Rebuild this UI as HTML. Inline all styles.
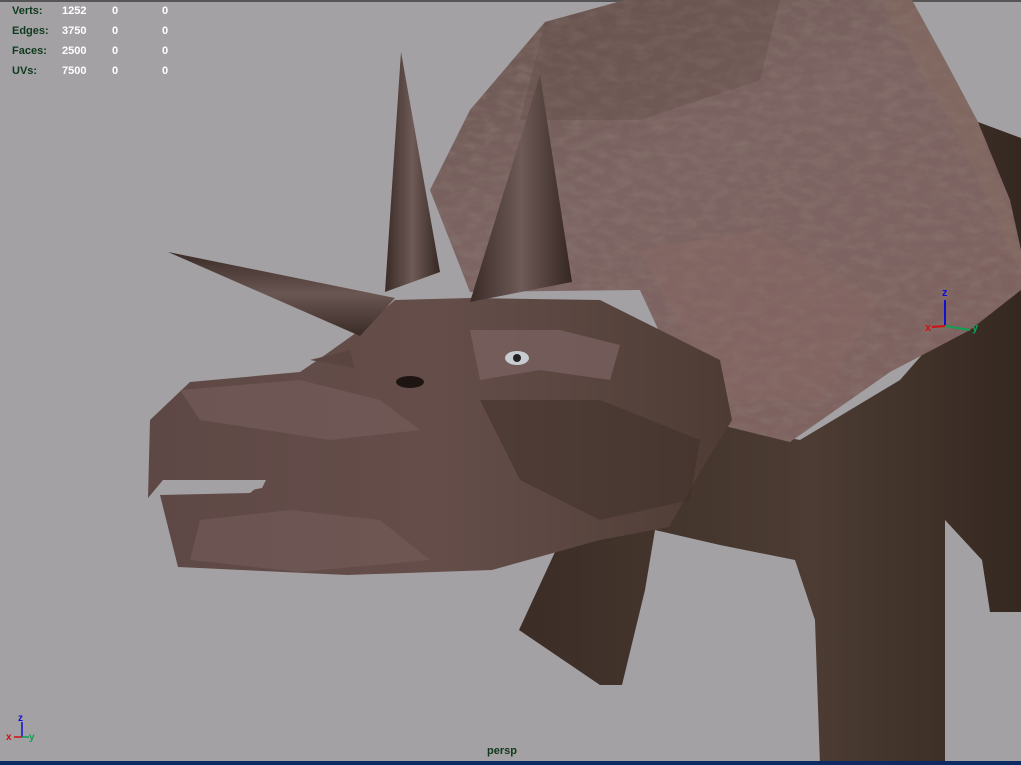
<!DOCTYPE html>
<html><head><meta charset="utf-8"><style>
html,body{margin:0;padding:0;width:1021px;height:765px;overflow:hidden;background:#a3a1a3;font-family:"Liberation Sans",Arial,sans-serif}
.st{position:absolute;font-size:11px;font-weight:bold;color:#fff}
.lb{color:#0f3a1e}
</style></head><body>
<svg width="1021" height="765" style="position:absolute;left:0;top:0">
<defs>
<linearGradient id="fr" x1="0" y1="0" x2="0.6" y2="1"><stop offset="0" stop-color="#6a5550"/><stop offset="0.45" stop-color="#7c6462"/><stop offset="1" stop-color="#7e6260"/></linearGradient>
<linearGradient id="bd" x1="0" y1="0" x2="1" y2="0"><stop offset="0" stop-color="#3a2c25"/><stop offset="0.6" stop-color="#4c3c33"/><stop offset="1" stop-color="#352820"/></linearGradient>
<linearGradient id="hd" x1="0" y1="0" x2="1" y2="0"><stop offset="0" stop-color="#5e4845"/><stop offset="0.5" stop-color="#654e4a"/><stop offset="1" stop-color="#4e3c34"/></linearGradient>
<linearGradient id="hn" x1="0" y1="0" x2="1" y2="0"><stop offset="0" stop-color="#3a2b27"/><stop offset="0.5" stop-color="#6e5a56"/><stop offset="1" stop-color="#352722"/></linearGradient>
<linearGradient id="hn2" x1="0" y1="0" x2="0" y2="1"><stop offset="0" stop-color="#3a2b27"/><stop offset="0.5" stop-color="#6a5652"/><stop offset="1" stop-color="#3a2b27"/></linearGradient>
<filter id="tx" x="0" y="0" width="1" height="1"><feTurbulence type="fractalNoise" baseFrequency="0.06 0.12" numOctaves="3" seed="3"/><feColorMatrix values="0 0 0 0 0.25  0 0 0 0 0.18  0 0 0 0 0.16  0 0 0 1.2 -0.45"/><feComposite in2="SourceGraphic" operator="in"/></filter>
</defs>
<rect x="0" y="0" width="1021" height="2" fill="#555"/>
<!-- body -->
<polygon fill="url(#bd)" points="620,400 700,420 800,440 900,380 970,300 978,122 1021,138 1021,612 990,612 982,560 945,520 945,765 820,765 815,620 795,560 720,545 655,530 645,590 622,685 600,685 519,630 555,552 500,520"/>
<!-- frill -->
<polygon fill="url(#fr)" points="430,190 470,110 545,22 625,0 912,0 945,60 978,122 1010,200 1021,250 1021,290 970,330 890,372 790,442 700,420 640,290 470,292"/>
<polygon fill="#000" filter="url(#tx)" points="430,190 470,110 545,22 625,0 912,0 945,60 978,122 1010,200 1021,250 1021,290 970,330 890,372 790,442 700,420 640,290 470,292"/>
<polygon fill="#8a7060" opacity="0.35" points="880,0 912,0 978,122 1021,250 1021,275 960,140"/>
<polygon fill="#5c4842" opacity="0.3" points="545,22 625,0 780,0 760,80 640,120 520,120"/>
<polygon fill="#8a6a64" opacity="0.4" points="640,250 760,230 880,300 820,400 720,400"/>
<!-- head -->
<polygon fill="url(#hd)" points="150,420 190,382 300,372 325,355 360,330 395,300 470,298 600,300 640,320 720,360 732,420 700,472 669,527 600,540 492,570 347,575 178,567 160,495 250,493 266,480 163,480 148,498"/>
<polygon fill="#7a6260" opacity="0.5" points="180,390 300,380 380,400 420,430 330,440 200,420"/>
<polygon fill="#7a6260" opacity="0.45" points="200,520 290,510 380,520 430,560 300,572 190,560"/>
<polygon fill="#3e2e28" opacity="0.5" points="480,400 600,400 700,440 690,500 600,520 520,480"/>
<polygon fill="#7c6462" opacity="0.7" points="470,330 560,330 620,345 610,380 540,370 480,380"/>
<polygon fill="#a3a1a3" points="163,480 266,480 262,488 240,492 170,493"/>
<ellipse cx="517" cy="358" rx="12" ry="7" fill="#c8ccd0"/><circle cx="517" cy="358" r="4" fill="#222"/>
<ellipse cx="410" cy="382" rx="14" ry="6" fill="#1e1512"/>
<!-- horns -->
<polygon fill="url(#hn2)" points="168,252 395,298 360,336"/>
<polygon fill="url(#hn)" points="401,52 385,292 440,272"/>
<polygon fill="url(#hn)" points="540,75 470,302 572,282"/>
<polygon fill="#5a4540" points="310,360 350,350 355,368"/>
<!-- axes viewport -->
<line x1="945" y1="300" x2="945" y2="326" stroke="#1010d0" stroke-width="2"/>
<line x1="945" y1="326" x2="932" y2="327" stroke="#d01010" stroke-width="2"/>
<line x1="945" y1="326" x2="970" y2="330" stroke="#10a050" stroke-width="2"/>
<text x="942" y="296" font-size="11" font-weight="bold" fill="#1010d0" font-family="Liberation Sans">z</text>
<text x="925" y="331" font-size="11" font-weight="bold" fill="#d01010" font-family="Liberation Sans">x</text>
<text x="972" y="331" font-size="11" font-weight="bold" fill="#10a050" font-family="Liberation Sans">y</text>
<!-- corner axes -->
<line x1="22" y1="722" x2="22" y2="737" stroke="#1010d0" stroke-width="1.5"/>
<line x1="22" y1="737" x2="14" y2="737" stroke="#d01010" stroke-width="1.5"/>
<line x1="22" y1="737" x2="29" y2="737" stroke="#10a050" stroke-width="1.5"/>
<text x="18" y="721" font-size="10" font-weight="bold" fill="#1010d0" font-family="Liberation Sans">z</text>
<text x="6" y="740" font-size="10" font-weight="bold" fill="#d01010" font-family="Liberation Sans">x</text>
<text x="29" y="740" font-size="10" font-weight="bold" fill="#10a050" font-family="Liberation Sans">y</text>
<rect x="0" y="761" width="1021" height="4" fill="#0e2a62"/>
</svg>
<div class="st lb" style="left:12px;top:5px">Verts:</div><div class="st" style="left:62px;top:5px">1252</div><div class="st" style="left:112px;top:5px">0</div><div class="st" style="left:162px;top:5px">0</div>
<div class="st lb" style="left:12px;top:25px">Edges:</div><div class="st" style="left:62px;top:25px">3750</div><div class="st" style="left:112px;top:25px">0</div><div class="st" style="left:162px;top:25px">0</div>
<div class="st lb" style="left:12px;top:45px">Faces:</div><div class="st" style="left:62px;top:45px">2500</div><div class="st" style="left:112px;top:45px">0</div><div class="st" style="left:162px;top:45px">0</div>
<div class="st lb" style="left:12px;top:65px">UVs:</div><div class="st" style="left:62px;top:65px">7500</div><div class="st" style="left:112px;top:65px">0</div><div class="st" style="left:162px;top:65px">0</div>
<div style="position:absolute;left:487px;top:745px;font-size:11px;color:#0f3a1e;font-weight:bold">persp</div>
</body></html>
